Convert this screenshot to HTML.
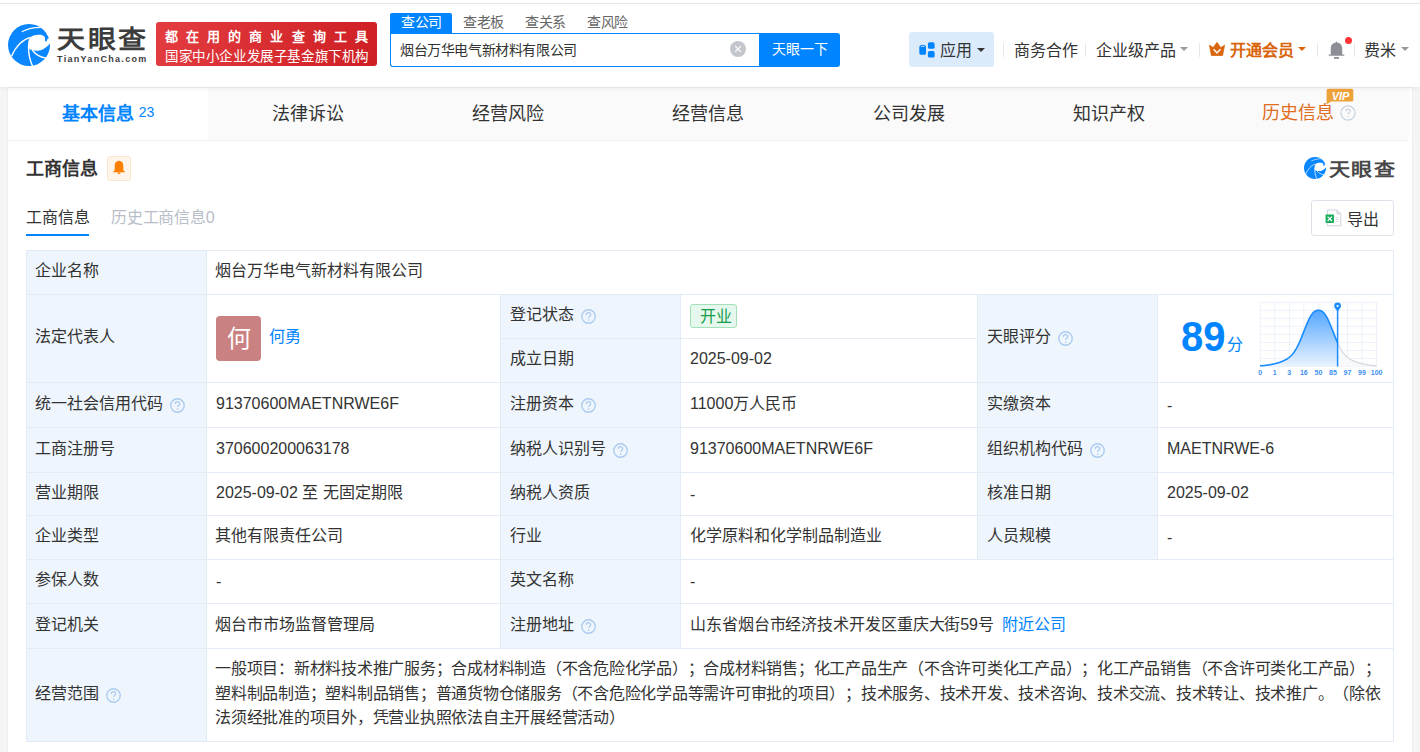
<!DOCTYPE html>
<html lang="zh-CN">
<head>
<meta charset="utf-8">
<style>
*{box-sizing:border-box;margin:0;padding:0}
html,body{width:1420px;height:752px;overflow:hidden}
body{text-spacing-trim:space-all;position:relative;background:#f5f5f5;font-family:"Liberation Sans",sans-serif;color:#333}
.a{position:absolute;white-space:nowrap}
#hdr{position:absolute;left:0;top:0;width:1420px;height:87px;background:#fff;box-shadow:0 1px 5px rgba(0,0,0,.07);z-index:5}
#topline{position:absolute;left:0;top:3px;width:1420px;height:1px;background:#e6e6e6}
.sep{position:absolute;width:1px;height:14px;top:43px;background:#e8e8e8}
.caret{position:absolute;width:0;height:0;border-left:4px solid transparent;border-right:4px solid transparent;border-top:4px solid #333}
#card{position:absolute;left:8px;top:88px;width:1404px;height:700px;background:#fff;box-shadow:0 0 1px rgba(0,0,0,.18)}
#tabs{position:absolute;left:0;top:0;width:1401px;height:53px;background:#fafafa;border-bottom:1px solid #f0f0f0}
.tab{position:absolute;top:0;height:53px;width:200.143px;text-align:center;font-size:18px;line-height:52px;color:#333}
.hl{position:absolute;height:1px;background:#e3ecf5}
.vl{position:absolute;width:1px;background:#e3ecf5}
.lb{position:absolute;background:#eef5fc}
.t{position:absolute;white-space:nowrap;font-size:16px;color:#333}
.q{display:inline-block;margin-left:6.5px;vertical-align:middle;position:relative;top:0.5px}
</style>
</head>
<body>
<div id="hdr">
  <div id="topline"></div>

<svg viewBox="0 0 42 42" width="42" height="42" class="a" style="left:8px;top:24px">
<circle cx="21" cy="21" r="21" fill="#0a86ff"/>
<path d="M22.5,13.3 C24.5,11.6 26.5,11 28.4,10.9 C31,10.7 33,10.8 34.3,11.3 C35.8,11.9 36.8,12.6 37,14 C37.2,15.3 37,16.3 37.1,17 C37.3,17.6 37.8,17.7 38.2,17.4 C39,16.8 39.5,15.5 39.6,14.5 L44,14.5 L44,19.6 L41.9,19.6 C41,21 40,22 38.7,22.7 C36.3,24.4 34,26.2 31.8,26.5 C29,26.8 26,26.8 24.2,26.1 C22.8,25.6 21.6,25.3 21.1,24.7 C20.3,23 19.9,21.3 20.1,19.6 C20.2,17 21,15 22.5,13.3 Z" fill="#fff"/>
<path d="M13.8,7.8 C19,5 26,3.4 33,3.4" fill="none" stroke="#fff" stroke-width="1.1"/>
<path d="M22.5,13.3 C14,15.5 7.5,23 3.4,32.5" fill="none" stroke="#fff" stroke-width="1.3"/>
<path d="M20.6,21 C20.2,29 21.6,36 25,43" fill="none" stroke="#fff" stroke-width="1.4"/>
<path d="M24.2,26 C27.5,30.5 32.5,33.4 38.5,34.2" fill="none" stroke="#fff" stroke-width="1.3"/>
</svg>

  <div class="a" style="left:57px;top:20px;font-size:28px;font-weight:bold;color:#3c3c3c;letter-spacing:2.6px;transform:scaleY(0.89);transform-origin:0 0">天眼查</div>
  <div class="a" style="left:57px;top:54px;font-size:9px;font-weight:bold;color:#3c3c3c;letter-spacing:1.3px">TianYanCha.com</div>
  <div class="a" style="left:156px;top:22px;width:221px;height:44px;border-radius:3px;background:linear-gradient(100deg,#e33c40,#ce1f24)"></div>
  <div class="a" style="left:165px;top:26px;font-size:13px;color:#fff;letter-spacing:8.1px;font-weight:bold">都在用的商业查询工具</div>
  <div class="a" style="left:165px;top:45px;font-size:13.5px;color:#fff;letter-spacing:0.6px">国家中小企业发展子基金旗下机构</div>
  <div class="a" style="left:390px;top:13px;width:62px;height:21px;background:#0084ff;border-radius:2px 2px 0 0"></div>
  <div class="a" style="left:401px;top:11px;font-size:14px;letter-spacing:-0.3px;color:#fff">查公司</div>
  <div class="a" style="left:463px;top:11px;font-size:14px;letter-spacing:-0.3px;color:#666">查老板</div>
  <div class="a" style="left:525px;top:11px;font-size:14px;letter-spacing:-0.3px;color:#666">查关系</div>
  <div class="a" style="left:587px;top:11px;font-size:14px;letter-spacing:-0.3px;color:#666">查风险</div>
  <div class="a" style="left:390px;top:33px;width:370px;height:34px;border:1px solid #0084ff;border-right:0;border-radius:0 0 0 3px;background:#fff"></div>
  <div class="a" style="left:400px;top:39px;font-size:14px;letter-spacing:-0.4px;color:#333">烟台万华电气新材料有限公司</div>
  <svg class="a" style="left:730px;top:41px" width="16" height="16" viewBox="0 0 16 16"><circle cx="8" cy="8" r="8" fill="#c3c6cc"/><path d="M5.2,5.2 L10.8,10.8 M10.8,5.2 L5.2,10.8" stroke="#fff" stroke-width="1.2"/></svg>
  <div class="a" style="left:759px;top:33px;width:81px;height:34px;background:#0084ff;border-radius:0 3px 3px 0"></div>
  <div class="a" style="left:772px;top:38px;font-size:14px;color:#fff">天眼一下</div>
  <div class="a" style="left:909px;top:32px;width:85px;height:35px;background:#dcebfb;border-radius:3px"></div>
  <svg class="a" style="left:919px;top:42px" width="16" height="16" viewBox="0 0 16 16"><path d="M0.3,5.5 C0.3,3.6 1.6,2.8 3.6,2.8 C5.6,2.8 7,3.6 7,5.5 L7,11 C7,12.2 6.3,12.8 5.3,12.8 L2,12.8 C1,12.8 0.3,12.2 0.3,11 Z" fill="#0084ff"/><path d="M2.2,4.6 Q3.6,3.7 5.1,4.6" stroke="#dcebfb" stroke-width="1" fill="none"/><rect x="8.9" y="0.3" width="6.7" height="6.5" rx="1.6" fill="#0084ff"/><rect x="8.9" y="9.1" width="6.7" height="6.4" rx="1.6" fill="#0084ff"/></svg>
  <div class="a" style="left:940px;top:37px;font-size:16px;color:#333">应用</div>
  <div class="caret" style="left:977px;top:48px"></div>
  <div class="sep" style="left:1003px"></div>
  <div class="a" style="left:1014px;top:37px;font-size:16px;color:#333">商务合作</div>
  <div class="sep" style="left:1085px"></div>
  <div class="a" style="left:1096px;top:37px;font-size:16px;color:#333">企业级产品</div>
  <div class="caret" style="left:1180px;top:47px;border-top-color:#999"></div>
  <div class="sep" style="left:1199px"></div>
  <svg class="a" style="left:1209px;top:42px" width="16" height="14" viewBox="0 0 16 14"><path d="M0.3,3 L4.2,5.6 L8,0.2 L11.8,5.6 L15.7,3 L13.6,13.7 L2.4,13.7 Z" fill="#d9650c" stroke="#d9650c" stroke-width="0.6" stroke-linejoin="round"/><path d="M4.6,7.2 L8,11 L11.4,7.2" fill="none" stroke="#fff" stroke-width="1.5"/></svg>
  <div class="a" style="left:1230px;top:37px;font-size:16px;color:#d9650c;font-weight:bold">开通会员</div>
  <div class="caret" style="left:1298px;top:47px;border-top-color:#d9650c"></div>
  <div class="sep" style="left:1317px"></div>
  <svg class="a" style="left:1328px;top:40px" width="17" height="20" viewBox="0 0 17 20"><path d="M8.5,1 L9.1,2.6 C12.5,3 14.2,5.6 14.2,8.5 L14.2,14.6 L16.3,14.6 L16.3,15.8 L0.7,15.8 L0.7,14.6 L2.8,14.6 L2.8,8.5 C2.8,5.6 4.5,3 7.9,2.6 Z" fill="#8c9096"/><rect x="6" y="17" width="5" height="1.8" fill="#8c9096"/></svg>
  <div class="a" style="left:1345px;top:36.5px;width:7px;height:7px;border-radius:50%;background:#ff3434"></div>
  <div class="sep" style="left:1354px"></div>
  <div class="a" style="left:1364px;top:37px;font-size:16px;color:#333">费米</div>
  <div class="caret" style="left:1401px;top:47px;border-top-color:#999"></div>
</div>

<div id="card">
  <div id="tabs">
    <div class="tab" style="left:0;height:52px;background:#fff;color:#0084ff;font-weight:bold">基本信息<span style="font-weight:normal;font-size:14px;margin-left:5px;vertical-align:top;position:relative;top:-2px">23</span></div>
    <div class="tab" style="left:200.143px">法律诉讼</div>
    <div class="tab" style="left:400.286px">经营风险</div>
    <div class="tab" style="left:600.429px">经营信息</div>
    <div class="tab" style="left:800.571px">公司发展</div>
    <div class="tab" style="left:1000.714px">知识产权</div>
    
  </div>
</div>
<div class="a" style="left:1262px;top:100px;font-size:18px;line-height:26px;color:#e06c1d">历史信息</div>
<svg class="a" style="left:1326px;top:88px" width="28" height="17" viewBox="0 0 28 17"><path d="M2.5,0.8 L25.5,0.8 C26.6,0.8 27.3,1.5 27.3,2.6 L27.3,11.8 C27.3,12.9 26.6,13.6 25.5,13.6 L5,13.6 L0.6,16.6 L0.6,2.6 C0.6,1.5 1.4,0.8 2.5,0.8 Z" fill="#eea23a"/><text x="14.5" y="11.6" font-size="11" font-weight="bold" font-style="italic" fill="#fff" text-anchor="middle" font-family="Liberation Sans">VIP</text></svg>
<svg class="a" style="left:1340px;top:105px" width="16" height="16" viewBox="0 0 15 15"><circle cx="7.5" cy="7.5" r="6.6" fill="none" stroke="#c8d2df" stroke-width="1.1"/><path d="M5.6,5.9 C5.6,4.6 6.5,3.9 7.5,3.9 C8.6,3.9 9.4,4.6 9.4,5.7 C9.4,7 7.6,7.2 7.6,8.9" fill="none" stroke="#c8d2df" stroke-width="1.1"/><circle cx="7.6" cy="10.9" r="0.7" fill="#c8d2df"/></svg>

<div class="a" style="left:26px;top:154px;font-size:18px;font-weight:bold;color:#333">工商信息</div>
<div class="a" style="left:107px;top:156px;width:24px;height:25px;background:#fff5eb;border:1px solid #fde5d0;border-radius:3px"></div>
<svg class="a" style="left:112px;top:160px" width="14" height="15" viewBox="0 0 14 15"><path d="M7,0.8 C9.8,0.8 11.3,3 11.3,5.6 L11.3,10.4 L12.8,11.3 L12.8,12.3 L1.2,12.3 L1.2,11.3 L2.7,10.4 L2.7,5.6 C2.7,3 4.2,0.8 7,0.8 Z" fill="#ff7f00"/><path d="M5.3,12.6 A1.7,1.5 0 0 0 8.7,12.6 Z" fill="#ff7f00"/></svg>
<div class="a" style="left:26px;top:204px;font-size:16px;color:#333">工商信息</div>
<div class="a" style="left:26px;top:234px;width:63px;height:2px;background:#0084ff"></div>
<div class="a" style="left:111px;top:204px;font-size:16px;letter-spacing:-0.2px;color:#b8bec8">历史工商信息0</div>

<svg viewBox="0 0 42 42" width="22" height="22" class="a" style="left:1304px;top:157px">
<circle cx="21" cy="21" r="21" fill="#0a86ff"/>
<path d="M22.5,13.3 C24.5,11.6 26.5,11 28.4,10.9 C31,10.7 33,10.8 34.3,11.3 C35.8,11.9 36.8,12.6 37,14 C37.2,15.3 37,16.3 37.1,17 C37.3,17.6 37.8,17.7 38.2,17.4 C39,16.8 39.5,15.5 39.6,14.5 L44,14.5 L44,19.6 L41.9,19.6 C41,21 40,22 38.7,22.7 C36.3,24.4 34,26.2 31.8,26.5 C29,26.8 26,26.8 24.2,26.1 C22.8,25.6 21.6,25.3 21.1,24.7 C20.3,23 19.9,21.3 20.1,19.6 C20.2,17 21,15 22.5,13.3 Z" fill="#fff"/>
<path d="M13.8,7.8 C19,5 26,3.4 33,3.4" fill="none" stroke="#fff" stroke-width="1.1"/>
<path d="M22.5,13.3 C14,15.5 7.5,23 3.4,32.5" fill="none" stroke="#fff" stroke-width="1.3"/>
<path d="M20.6,21 C20.2,29 21.6,36 25,43" fill="none" stroke="#fff" stroke-width="1.4"/>
<path d="M24.2,26 C27.5,30.5 32.5,33.4 38.5,34.2" fill="none" stroke="#fff" stroke-width="1.3"/>
</svg>
<div class="a" style="left:1329px;top:156px;font-size:21px;font-weight:bold;color:#484848;letter-spacing:1.3px;transform:scaleY(0.85);transform-origin:0 0">天眼查</div>
<div class="a" style="left:1311px;top:200px;width:83px;height:36px;border:1px solid #dde2ea;border-radius:3px;background:#fff"></div>
<svg class="a" style="left:1325px;top:209px" width="17" height="18" viewBox="0 0 17 18"><path d="M2.3,1 L12,1 L15.8,4.8 L15.8,16.8 L2.3,16.8 Z" fill="#fff" stroke="#c9ced8" stroke-width="0.9"/><path d="M12,1 L12,4.8 L15.8,4.8" fill="#e6e9ef" stroke="#c9ced8" stroke-width="0.9"/><rect x="0.6" y="5.5" width="8.4" height="8.5" rx="0.8" fill="#1aac5b"/><path d="M2.6,7.6 L7,12 M7,7.6 L2.6,12" stroke="#fff" stroke-width="1.2"/><path d="M10.8,8.5 L13.5,8.5 M10.8,10.5 L13.5,10.5 M10.8,12.5 L13.5,12.5" stroke="#d2d6de" stroke-width="0.9"/></svg>
<div class="a" style="left:1347px;top:206px;font-size:16px;color:#333">导出</div>

<div class="lb" style="left:26px;top:250px;width:180px;height:491px"></div>
<div class="lb" style="left:500px;top:294px;width:180px;height:354px"></div>
<div class="lb" style="left:977px;top:294px;width:180px;height:265px"></div>
<div class="hl" style="left:26px;top:250px;width:1368px"></div>
<div class="hl" style="left:26px;top:294px;width:1368px"></div>
<div class="hl" style="left:26px;top:382px;width:1368px"></div>
<div class="hl" style="left:26px;top:427px;width:1368px"></div>
<div class="hl" style="left:26px;top:472px;width:1368px"></div>
<div class="hl" style="left:26px;top:515px;width:1368px"></div>
<div class="hl" style="left:26px;top:559px;width:1368px"></div>
<div class="hl" style="left:26px;top:603px;width:1368px"></div>
<div class="hl" style="left:26px;top:648px;width:1368px"></div>
<div class="hl" style="left:26px;top:741px;width:1368px"></div>
<div class="hl" style="left:500px;top:338px;width:478px"></div>
<div class="vl" style="left:26px;top:250px;height:492px"></div>
<div class="vl" style="left:206px;top:250px;height:492px"></div>
<div class="vl" style="left:1393px;top:250px;height:492px"></div>
<div class="vl" style="left:500px;top:294px;height:355px"></div>
<div class="vl" style="left:680px;top:294px;height:355px"></div>
<div class="vl" style="left:977px;top:294px;height:266px"></div>
<div class="vl" style="left:1157px;top:294px;height:266px"></div>
<div class="t" style="left:35px;top:249px;height:44px;line-height:44px;">企业名称</div>
<div class="t" style="left:215px;top:249px;height:44px;line-height:44px;">烟台万华电气新材料有限公司</div>
<div class="t" style="left:35px;top:293px;height:88px;line-height:88px;">法定代表人</div>
<div class="a" style="left:216px;top:316px;width:45px;height:45px;border-radius:4px;background:#c98181"></div>
<div class="a" style="left:216px;top:316px;width:45px;height:45px;line-height:45px;text-align:center;font-size:24px;color:#fff">何</div>
<div class="t" style="left:269px;top:293px;height:88px;line-height:88px;color:#0084ff">何勇</div>
<div class="t" style="left:510px;top:293px;height:44px;line-height:44px;">登记状态<svg class="q" width="15" height="15" viewBox="0 0 15 15"><circle cx="7.5" cy="7.5" r="6.75" fill="none" stroke="#acccef" stroke-width="1.35"/><path d="M5.3,5.9 C5.3,4.5 6.3,3.7 7.5,3.7 C8.8,3.7 9.7,4.5 9.7,5.7 C9.7,7.2 7.6,7.4 7.6,9.1" fill="none" stroke="#acccef" stroke-width="1.2"/><circle cx="7.6" cy="11.1" r="0.8" fill="#acccef"/></svg></div>
<div class="a" style="left:690px;top:304px;width:47px;height:24px;border:1px solid #a3e0b8;border-radius:3px;background:#e6f8ed"></div>
<div class="t" style="left:700px;top:295px;height:44px;line-height:44px;color:#129d4a">开业</div>
<div class="t" style="left:510px;top:337px;height:44px;line-height:44px;">成立日期</div>
<div class="t" style="left:690px;top:337px;height:44px;line-height:44px;">2025-09-02</div>
<div class="t" style="left:987px;top:293px;height:88px;line-height:88px;">天眼评分<svg class="q" width="15" height="15" viewBox="0 0 15 15"><circle cx="7.5" cy="7.5" r="6.75" fill="none" stroke="#acccef" stroke-width="1.35"/><path d="M5.3,5.9 C5.3,4.5 6.3,3.7 7.5,3.7 C8.8,3.7 9.7,4.5 9.7,5.7 C9.7,7.2 7.6,7.4 7.6,9.1" fill="none" stroke="#acccef" stroke-width="1.2"/><circle cx="7.6" cy="11.1" r="0.8" fill="#acccef"/></svg></div>
<div class="a" style="left:1181px;top:311px;font-size:43px;font-weight:bold;color:#0084ff;line-height:50px;transform:scaleX(0.93);transform-origin:0 0">89</div>
<div class="a" style="left:1227px;top:333px;font-size:16px;color:#0084ff;line-height:24px">分</div>
<svg class="a" style="left:1250px;top:295px" width="140" height="85" viewBox="0 0 140 85"><defs><linearGradient id="cg" x1="0" y1="0" x2="0" y2="1"><stop offset="0" stop-color="#54a6ff"/><stop offset="1" stop-color="#eaf4ff"/></linearGradient></defs><line x1="10.20" y1="7.3" x2="10.20" y2="71.4" stroke="#edf2f9" stroke-width="1"/><line x1="24.75" y1="7.3" x2="24.75" y2="71.4" stroke="#edf2f9" stroke-width="1"/><line x1="39.30" y1="7.3" x2="39.30" y2="71.4" stroke="#edf2f9" stroke-width="1"/><line x1="53.85" y1="7.3" x2="53.85" y2="71.4" stroke="#edf2f9" stroke-width="1"/><line x1="68.40" y1="7.3" x2="68.40" y2="71.4" stroke="#edf2f9" stroke-width="1"/><line x1="82.95" y1="7.3" x2="82.95" y2="71.4" stroke="#edf2f9" stroke-width="1"/><line x1="97.50" y1="7.3" x2="97.50" y2="71.4" stroke="#edf2f9" stroke-width="1"/><line x1="112.05" y1="7.3" x2="112.05" y2="71.4" stroke="#edf2f9" stroke-width="1"/><line x1="126.60" y1="7.3" x2="126.60" y2="71.4" stroke="#edf2f9" stroke-width="1"/><line x1="10.2" y1="7.30" x2="126.6" y2="7.30" stroke="#edf2f9" stroke-width="1"/><line x1="10.2" y1="15.31" x2="126.6" y2="15.31" stroke="#edf2f9" stroke-width="1"/><line x1="10.2" y1="23.33" x2="126.6" y2="23.33" stroke="#edf2f9" stroke-width="1"/><line x1="10.2" y1="31.34" x2="126.6" y2="31.34" stroke="#edf2f9" stroke-width="1"/><line x1="10.2" y1="39.35" x2="126.6" y2="39.35" stroke="#edf2f9" stroke-width="1"/><line x1="10.2" y1="47.36" x2="126.6" y2="47.36" stroke="#edf2f9" stroke-width="1"/><line x1="10.2" y1="55.38" x2="126.6" y2="55.38" stroke="#edf2f9" stroke-width="1"/><line x1="10.2" y1="63.39" x2="126.6" y2="63.39" stroke="#edf2f9" stroke-width="1"/><line x1="10.2" y1="71.40" x2="126.6" y2="71.40" stroke="#edf2f9" stroke-width="1"/><path d="M10.2,71.4 L10.0,70.84 L10.5,70.80 L11.0,70.77 L11.5,70.73 L12.0,70.69 L12.5,70.64 L13.0,70.60 L13.5,70.55 L14.0,70.50 L14.5,70.45 L15.0,70.40 L15.5,70.34 L16.0,70.28 L16.5,70.22 L17.0,70.16 L17.5,70.09 L18.0,70.02 L18.5,69.94 L19.0,69.87 L19.5,69.79 L20.0,69.70 L20.5,69.62 L21.0,69.53 L21.5,69.43 L22.0,69.34 L22.5,69.24 L23.0,69.13 L23.5,69.02 L24.0,68.91 L24.5,68.79 L25.0,68.67 L25.5,68.55 L26.0,68.42 L26.5,68.28 L27.0,68.14 L27.5,68.00 L28.0,67.85 L28.5,67.70 L29.0,67.54 L29.5,67.37 L30.0,67.20 L30.5,67.03 L31.0,66.84 L31.5,66.65 L32.0,66.46 L32.5,66.25 L33.0,66.04 L33.5,65.82 L34.0,65.59 L34.5,65.34 L35.0,65.09 L35.5,64.83 L36.0,64.55 L36.5,64.26 L37.0,63.95 L37.5,63.63 L38.0,63.28 L38.5,62.92 L39.0,62.54 L39.5,62.14 L40.0,61.71 L40.5,61.25 L41.0,60.77 L41.5,60.26 L42.0,59.72 L42.5,59.15 L43.0,58.54 L43.5,57.90 L44.0,57.22 L44.5,56.50 L45.0,55.74 L45.5,54.94 L46.0,54.11 L46.5,53.23 L47.0,52.31 L47.5,51.35 L48.0,50.36 L48.5,49.32 L49.0,48.25 L49.5,47.14 L50.0,46.00 L50.5,44.83 L51.0,43.64 L51.5,42.42 L52.0,41.17 L52.5,39.92 L53.0,38.65 L53.5,37.37 L54.0,36.09 L54.5,34.81 L55.0,33.54 L55.5,32.28 L56.0,31.04 L56.5,29.82 L57.0,28.63 L57.5,27.47 L58.0,26.34 L58.5,25.26 L59.0,24.22 L59.5,23.23 L60.0,22.29 L60.5,21.41 L61.0,20.58 L61.5,19.81 L62.0,19.11 L62.5,18.47 L63.0,17.89 L63.5,17.37 L64.0,16.91 L64.5,16.52 L65.0,16.19 L65.5,15.92 L66.0,15.70 L66.5,15.53 L67.0,15.41 L67.5,15.34 L68.0,15.31 L68.5,15.30 L69.0,15.32 L69.5,15.37 L70.0,15.46 L70.5,15.59 L71.0,15.78 L71.5,16.02 L72.0,16.31 L72.5,16.67 L73.0,17.09 L73.5,17.57 L74.0,18.11 L74.5,18.72 L75.0,19.38 L75.5,20.11 L76.0,20.90 L76.5,21.75 L77.0,22.66 L77.5,23.62 L78.0,24.63 L78.5,25.69 L79.0,26.79 L79.5,27.93 L80.0,29.10 L80.5,30.31 L81.0,31.54 L81.5,32.78 L82.0,34.05 L82.5,35.32 L83.0,36.60 L83.5,37.88 L84.0,39.16 L84.5,40.42 L85.0,41.67 L85.5,42.91 L86.0,44.12 L86.5,45.31 L87.0,46.46 L87.5,47.59 L87.6,47.81 L87.6,71.4 Z" fill="url(#cg)"/><path d="M87.6,71.4 L87.6,47.81 L88.0,48.68 L88.5,49.74 L89.0,50.76 L89.5,51.74 L90.0,52.68 L90.5,53.59 L91.0,54.45 L91.5,55.27 L92.0,56.05 L92.5,56.79 L93.0,57.49 L93.5,58.16 L94.0,58.79 L94.5,59.38 L95.0,59.94 L95.5,60.47 L96.0,60.97 L96.5,61.44 L97.0,61.88 L97.5,62.30 L98.0,62.70 L98.5,63.07 L99.0,63.42 L99.5,63.76 L100.0,64.08 L100.5,64.38 L101.0,64.66 L101.5,64.93 L102.0,65.19 L102.5,65.44 L103.0,65.68 L103.5,65.91 L104.0,66.13 L104.5,66.33 L105.0,66.54 L105.5,66.73 L106.0,66.92 L106.5,67.10 L107.0,67.27 L107.5,67.44 L108.0,67.60 L108.5,67.76 L109.0,67.91 L109.5,68.06 L110.0,68.20 L110.5,68.34 L111.0,68.47 L111.5,68.60 L112.0,68.72 L112.5,68.84 L113.0,68.95 L113.5,69.07 L114.0,69.17 L114.5,69.28 L115.0,69.38 L115.5,69.47 L116.0,69.56 L116.5,69.65 L117.0,69.74 L117.5,69.82 L118.0,69.90 L118.5,69.97 L119.0,70.05 L119.5,70.11 L120.0,70.18 L120.5,70.24 L121.0,70.31 L121.5,70.36 L122.0,70.42 L122.5,70.47 L123.0,70.52 L123.5,70.57 L124.0,70.62 L124.5,70.66 L125.0,70.70 L125.5,70.74 L126.0,70.78 L126.5,70.82 L126.6,71.4 Z" fill="#f6f7f9" opacity="0.8"/><path d="M87.6,47.81 L88.0,48.68 L88.5,49.74 L89.0,50.76 L89.5,51.74 L90.0,52.68 L90.5,53.59 L91.0,54.45 L91.5,55.27 L92.0,56.05 L92.5,56.79 L93.0,57.49 L93.5,58.16 L94.0,58.79 L94.5,59.38 L95.0,59.94 L95.5,60.47 L96.0,60.97 L96.5,61.44 L97.0,61.88 L97.5,62.30 L98.0,62.70 L98.5,63.07 L99.0,63.42 L99.5,63.76 L100.0,64.08 L100.5,64.38 L101.0,64.66 L101.5,64.93 L102.0,65.19 L102.5,65.44 L103.0,65.68 L103.5,65.91 L104.0,66.13 L104.5,66.33 L105.0,66.54 L105.5,66.73 L106.0,66.92 L106.5,67.10 L107.0,67.27 L107.5,67.44 L108.0,67.60 L108.5,67.76 L109.0,67.91 L109.5,68.06 L110.0,68.20 L110.5,68.34 L111.0,68.47 L111.5,68.60 L112.0,68.72 L112.5,68.84 L113.0,68.95 L113.5,69.07 L114.0,69.17 L114.5,69.28 L115.0,69.38 L115.5,69.47 L116.0,69.56 L116.5,69.65 L117.0,69.74 L117.5,69.82 L118.0,69.90 L118.5,69.97 L119.0,70.05 L119.5,70.11 L120.0,70.18 L120.5,70.24 L121.0,70.31 L121.5,70.36 L122.0,70.42 L122.5,70.47 L123.0,70.52 L123.5,70.57 L124.0,70.62 L124.5,70.66 L125.0,70.70 L125.5,70.74 L126.0,70.78 L126.5,70.82" fill="none" stroke="#d3d7de" stroke-width="1.2"/><path d="M10.0,70.84 L10.5,70.80 L11.0,70.77 L11.5,70.73 L12.0,70.69 L12.5,70.64 L13.0,70.60 L13.5,70.55 L14.0,70.50 L14.5,70.45 L15.0,70.40 L15.5,70.34 L16.0,70.28 L16.5,70.22 L17.0,70.16 L17.5,70.09 L18.0,70.02 L18.5,69.94 L19.0,69.87 L19.5,69.79 L20.0,69.70 L20.5,69.62 L21.0,69.53 L21.5,69.43 L22.0,69.34 L22.5,69.24 L23.0,69.13 L23.5,69.02 L24.0,68.91 L24.5,68.79 L25.0,68.67 L25.5,68.55 L26.0,68.42 L26.5,68.28 L27.0,68.14 L27.5,68.00 L28.0,67.85 L28.5,67.70 L29.0,67.54 L29.5,67.37 L30.0,67.20 L30.5,67.03 L31.0,66.84 L31.5,66.65 L32.0,66.46 L32.5,66.25 L33.0,66.04 L33.5,65.82 L34.0,65.59 L34.5,65.34 L35.0,65.09 L35.5,64.83 L36.0,64.55 L36.5,64.26 L37.0,63.95 L37.5,63.63 L38.0,63.28 L38.5,62.92 L39.0,62.54 L39.5,62.14 L40.0,61.71 L40.5,61.25 L41.0,60.77 L41.5,60.26 L42.0,59.72 L42.5,59.15 L43.0,58.54 L43.5,57.90 L44.0,57.22 L44.5,56.50 L45.0,55.74 L45.5,54.94 L46.0,54.11 L46.5,53.23 L47.0,52.31 L47.5,51.35 L48.0,50.36 L48.5,49.32 L49.0,48.25 L49.5,47.14 L50.0,46.00 L50.5,44.83 L51.0,43.64 L51.5,42.42 L52.0,41.17 L52.5,39.92 L53.0,38.65 L53.5,37.37 L54.0,36.09 L54.5,34.81 L55.0,33.54 L55.5,32.28 L56.0,31.04 L56.5,29.82 L57.0,28.63 L57.5,27.47 L58.0,26.34 L58.5,25.26 L59.0,24.22 L59.5,23.23 L60.0,22.29 L60.5,21.41 L61.0,20.58 L61.5,19.81 L62.0,19.11 L62.5,18.47 L63.0,17.89 L63.5,17.37 L64.0,16.91 L64.5,16.52 L65.0,16.19 L65.5,15.92 L66.0,15.70 L66.5,15.53 L67.0,15.41 L67.5,15.34 L68.0,15.31 L68.5,15.30 L69.0,15.32 L69.5,15.37 L70.0,15.46 L70.5,15.59 L71.0,15.78 L71.5,16.02 L72.0,16.31 L72.5,16.67 L73.0,17.09 L73.5,17.57 L74.0,18.11 L74.5,18.72 L75.0,19.38 L75.5,20.11 L76.0,20.90 L76.5,21.75 L77.0,22.66 L77.5,23.62 L78.0,24.63 L78.5,25.69 L79.0,26.79 L79.5,27.93 L80.0,29.10 L80.5,30.31 L81.0,31.54 L81.5,32.78 L82.0,34.05 L82.5,35.32 L83.0,36.60 L83.5,37.88 L84.0,39.16 L84.5,40.42 L85.0,41.67 L85.5,42.91 L86.0,44.12 L86.5,45.31 L87.0,46.46 L87.5,47.59 L87.6,47.81" fill="none" stroke="#1a8cff" stroke-width="1.6"/><line x1="87.6" y1="12" x2="87.6" y2="71.4" stroke="#1a8cff" stroke-width="1.5"/><path d="M84.19999999999999,11 a3.4,3.4 0 1 1 6.8,0 c0,2 -1.8,3.2 -3.4,5.4 c-1.6,-2.2 -3.4,-3.4 -3.4,-5.4z" fill="#1a8cff"/><circle cx="87.6" cy="11" r="1.1" fill="#fff"/><text x="10.2" y="80" font-size="7" font-weight="bold" fill="#3b8ff2" text-anchor="middle" font-family="Liberation Sans">0</text><text x="24.8" y="80" font-size="7" font-weight="bold" fill="#3b8ff2" text-anchor="middle" font-family="Liberation Sans">1</text><text x="39.3" y="80" font-size="7" font-weight="bold" fill="#3b8ff2" text-anchor="middle" font-family="Liberation Sans">3</text><text x="53.8" y="80" font-size="7" font-weight="bold" fill="#3b8ff2" text-anchor="middle" font-family="Liberation Sans">16</text><text x="68.4" y="80" font-size="7" font-weight="bold" fill="#3b8ff2" text-anchor="middle" font-family="Liberation Sans">50</text><text x="83.0" y="80" font-size="7" font-weight="bold" fill="#3b8ff2" text-anchor="middle" font-family="Liberation Sans">85</text><text x="97.5" y="80" font-size="7" font-weight="bold" fill="#3b8ff2" text-anchor="middle" font-family="Liberation Sans">97</text><text x="112.0" y="80" font-size="7" font-weight="bold" fill="#3b8ff2" text-anchor="middle" font-family="Liberation Sans">99</text><text x="126.6" y="80" font-size="7" font-weight="bold" fill="#3b8ff2" text-anchor="middle" font-family="Liberation Sans">100</text></svg>
<div class="t" style="left:35px;top:381px;height:45px;line-height:45px;">统一社会信用代码<svg class="q" width="15" height="15" viewBox="0 0 15 15"><circle cx="7.5" cy="7.5" r="6.75" fill="none" stroke="#acccef" stroke-width="1.35"/><path d="M5.3,5.9 C5.3,4.5 6.3,3.7 7.5,3.7 C8.8,3.7 9.7,4.5 9.7,5.7 C9.7,7.2 7.6,7.4 7.6,9.1" fill="none" stroke="#acccef" stroke-width="1.2"/><circle cx="7.6" cy="11.1" r="0.8" fill="#acccef"/></svg></div>
<div class="t" style="left:216px;top:381px;height:45px;line-height:45px;">91370600MAETNRWE6F</div>
<div class="t" style="left:510px;top:381px;height:45px;line-height:45px;">注册资本<svg class="q" width="15" height="15" viewBox="0 0 15 15"><circle cx="7.5" cy="7.5" r="6.75" fill="none" stroke="#acccef" stroke-width="1.35"/><path d="M5.3,5.9 C5.3,4.5 6.3,3.7 7.5,3.7 C8.8,3.7 9.7,4.5 9.7,5.7 C9.7,7.2 7.6,7.4 7.6,9.1" fill="none" stroke="#acccef" stroke-width="1.2"/><circle cx="7.6" cy="11.1" r="0.8" fill="#acccef"/></svg></div>
<div class="t" style="left:690px;top:381px;height:45px;line-height:45px;">11000万人民币</div>
<div class="t" style="left:987px;top:381px;height:45px;line-height:45px;">实缴资本</div>
<div class="t" style="left:1167px;top:381px;height:45px;line-height:45px;padding-top:2px;">-</div>
<div class="t" style="left:35px;top:426px;height:45px;line-height:45px;">工商注册号</div>
<div class="t" style="left:216px;top:426px;height:45px;line-height:45px;">370600200063178</div>
<div class="t" style="left:510px;top:426px;height:45px;line-height:45px;">纳税人识别号<svg class="q" width="15" height="15" viewBox="0 0 15 15"><circle cx="7.5" cy="7.5" r="6.75" fill="none" stroke="#acccef" stroke-width="1.35"/><path d="M5.3,5.9 C5.3,4.5 6.3,3.7 7.5,3.7 C8.8,3.7 9.7,4.5 9.7,5.7 C9.7,7.2 7.6,7.4 7.6,9.1" fill="none" stroke="#acccef" stroke-width="1.2"/><circle cx="7.6" cy="11.1" r="0.8" fill="#acccef"/></svg></div>
<div class="t" style="left:690px;top:426px;height:45px;line-height:45px;">91370600MAETNRWE6F</div>
<div class="t" style="left:987px;top:426px;height:45px;line-height:45px;">组织机构代码<svg class="q" width="15" height="15" viewBox="0 0 15 15"><circle cx="7.5" cy="7.5" r="6.75" fill="none" stroke="#acccef" stroke-width="1.35"/><path d="M5.3,5.9 C5.3,4.5 6.3,3.7 7.5,3.7 C8.8,3.7 9.7,4.5 9.7,5.7 C9.7,7.2 7.6,7.4 7.6,9.1" fill="none" stroke="#acccef" stroke-width="1.2"/><circle cx="7.6" cy="11.1" r="0.8" fill="#acccef"/></svg></div>
<div class="t" style="left:1167px;top:426px;height:45px;line-height:45px;">MAETNRWE-6</div>
<div class="t" style="left:35px;top:471px;height:43px;line-height:43px;">营业期限</div>
<div class="t" style="left:216px;top:471px;height:43px;line-height:43px;">2025-09-02 至 无固定期限</div>
<div class="t" style="left:510px;top:471px;height:43px;line-height:43px;">纳税人资质</div>
<div class="t" style="left:690px;top:471px;height:43px;line-height:43px;padding-top:2px;">-</div>
<div class="t" style="left:987px;top:471px;height:43px;line-height:43px;">核准日期</div>
<div class="t" style="left:1167px;top:471px;height:43px;line-height:43px;">2025-09-02</div>
<div class="t" style="left:35px;top:514px;height:44px;line-height:44px;">企业类型</div>
<div class="t" style="left:215px;top:514px;height:44px;line-height:44px;">其他有限责任公司</div>
<div class="t" style="left:510px;top:514px;height:44px;line-height:44px;">行业</div>
<div class="t" style="left:690px;top:514px;height:44px;line-height:44px;">化学原料和化学制品制造业</div>
<div class="t" style="left:987px;top:514px;height:44px;line-height:44px;">人员规模</div>
<div class="t" style="left:1167px;top:514px;height:44px;line-height:44px;padding-top:2px;">-</div>
<div class="t" style="left:35px;top:558px;height:44px;line-height:44px;">参保人数</div>
<div class="t" style="left:216px;top:558px;height:44px;line-height:44px;padding-top:2px;">-</div>
<div class="t" style="left:510px;top:558px;height:44px;line-height:44px;">英文名称</div>
<div class="t" style="left:690px;top:558px;height:44px;line-height:44px;padding-top:2px;">-</div>
<div class="t" style="left:35px;top:602px;height:45px;line-height:45px;">登记机关</div>
<div class="t" style="left:215px;top:602px;height:45px;line-height:45px;">烟台市市场监督管理局</div>
<div class="t" style="left:510px;top:602px;height:45px;line-height:45px;">注册地址<svg class="q" width="15" height="15" viewBox="0 0 15 15"><circle cx="7.5" cy="7.5" r="6.75" fill="none" stroke="#acccef" stroke-width="1.35"/><path d="M5.3,5.9 C5.3,4.5 6.3,3.7 7.5,3.7 C8.8,3.7 9.7,4.5 9.7,5.7 C9.7,7.2 7.6,7.4 7.6,9.1" fill="none" stroke="#acccef" stroke-width="1.2"/><circle cx="7.6" cy="11.1" r="0.8" fill="#acccef"/></svg></div>
<div class="t" style="left:690px;top:602px;height:45px;line-height:45px;"><span style="letter-spacing:-0.1px">山东省烟台市经济技术开发区重庆大街59号</span><span style="color:#0084ff;margin-left:8px">附近公司</span></div>
<div class="t" style="left:35px;top:647px;height:93px;line-height:93px;">经营范围<svg class="q" width="15" height="15" viewBox="0 0 15 15"><circle cx="7.5" cy="7.5" r="6.75" fill="none" stroke="#acccef" stroke-width="1.35"/><path d="M5.3,5.9 C5.3,4.5 6.3,3.7 7.5,3.7 C8.8,3.7 9.7,4.5 9.7,5.7 C9.7,7.2 7.6,7.4 7.6,9.1" fill="none" stroke="#acccef" stroke-width="1.2"/><circle cx="7.6" cy="11.1" r="0.8" fill="#acccef"/></svg></div>
<div class="a" style="left:215px;top:657px;font-size:16px;letter-spacing:-0.25px;line-height:24.5px;color:#333">一般项目：新材料技术推广服务；合成材料制造（不含危险化学品）；合成材料销售；化工产品生产（不含许可类化工产品）；化工产品销售（不含许可类化工产品）；<br>塑料制品制造；塑料制品销售；普通货物仓储服务（不含危险化学品等需许可审批的项目）；技术服务、技术开发、技术咨询、技术交流、技术转让、技术推广。（除依<br>法须经批准的项目外，凭营业执照依法自主开展经营活动）</div>
</body>
</html>
